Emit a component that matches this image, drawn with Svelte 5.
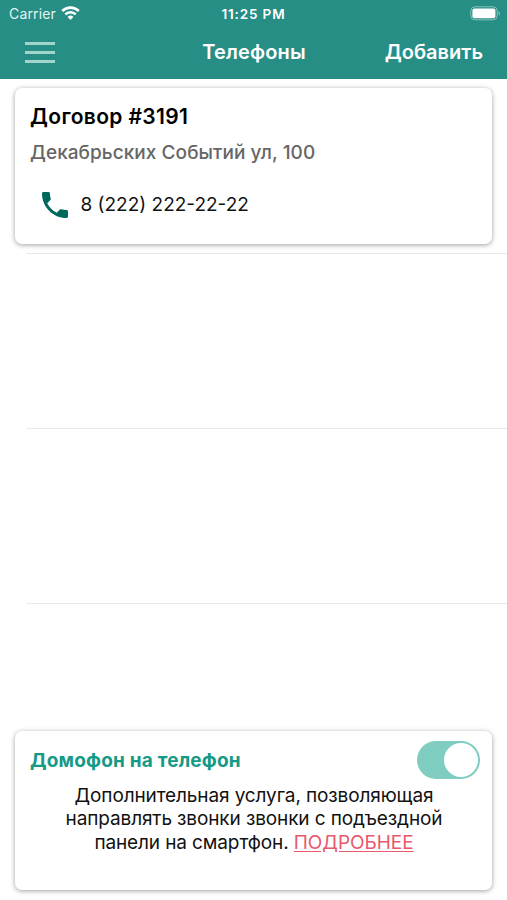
<script>
  const contracts = [
    {
      number: 3191,
      address: 'Декабрьских Событий ул, 100',
      phones: ['8 (222) 222-22-22'],
    },
  ];

  const emptyRows = [1, 2];

  let intercom = $state(true);
</script>

<div class="screen">
  <header>
    <div class="status-bar">
      <div class="carrier">
        <span>Carrier</span>
        <svg width="19" height="14" viewBox="0 0 19 14" fill="none" stroke="#fff" stroke-width="2.7">
          <path d="M1.2 5a11.8 11.8 0 0 1 16.6 0" />
          <path d="M4.3 8.4a7.4 7.4 0 0 1 10.4 0" />
          <path d="M9.5 14 6.6 10.9a4.1 4.1 0 0 1 5.8 0z" fill="#fff" stroke="none" />
        </svg>
      </div>
      <span class="time">11:25 PM</span>
      <svg class="battery" width="31" height="15" viewBox="0 0 31 15">
        <rect x="0.8" y="0.8" width="26.4" height="13" rx="4" fill="none" stroke="#fff" stroke-opacity="0.45" />
        <rect x="2.4" y="2.4" width="23" height="9.8" rx="2" fill="#fff" />
        <path d="M28.6 5.2c1.6.5 1.6 3.7 0 4.2z" fill="#fff" fill-opacity="0.5" />
      </svg>
    </div>
    <nav>
      <button class="menu" aria-label="Меню">
        <span></span>
        <span></span>
        <span></span>
      </button>
      <h1>Телефоны</h1>
      <button class="add">Добавить</button>
    </nav>
  </header>

  <main>
    {#each contracts as contract}
      <div class="row">
        <div class="card">
          <h2>Договор #{contract.number}</h2>
          <p class="address">{contract.address}</p>
          {#each contract.phones as phone}
            <div class="phone">
              <svg width="26" height="26" viewBox="3 3 18 18" fill="#00695c">
                <path d="M6.62 10.79c1.44 2.83 3.76 5.14 6.59 6.59l2.2-2.2c.27-.27.67-.36 1.02-.24 1.12.37 2.33.57 3.57.57.55 0 1 .45 1 1V20c0 .55-.45 1-1 1-9.39 0-17-7.61-17-17 0-.55.45-1 1-1h3.5c.55 0 1 .45 1 1 0 1.25.2 2.45.57 3.57.11.35.03.74-.25 1.02l-2.2 2.2z" />
              </svg>
              <span>{phone}</span>
            </div>
          {/each}
        </div>
      </div>
    {/each}
    {#each emptyRows as row (row)}
      <div class="row"></div>
    {/each}
  </main>

  <section class="card service">
    <div class="service-header">
      <h3>Домофон на телефон</h3>
      <button
        class="toggle"
        class:on={intercom}
        role="switch"
        aria-checked={intercom}
        aria-label="Домофон на телефон"
        onclick={() => (intercom = !intercom)}
      >
        <span class="knob"></span>
      </button>
    </div>
    <p>
      Дополнительная услуга, позволяющая<br />
      направлять звонки звонки с подъездной<br />
      панели на смартфон. <a href="#more">ПОДРОБНЕЕ</a>
    </p>
  </section>
</div>

<style>
  :global(body) {
    background: #fff;
  }

  .screen {
    display: flex;
    flex-direction: column;
    box-sizing: border-box;
    height: 900px;
    padding-bottom: 10px;
    overflow: hidden;
    font-family: Inter, 'Liberation Sans', sans-serif;
    color: #111;
    white-space: nowrap;
  }

  h1,
  h2,
  h3,
  p {
    margin: 0;
  }

  button {
    padding: 0;
    border: 0;
    background: none;
    font: inherit;
    color: inherit;
    cursor: pointer;
  }

  header {
    height: 79px;
    flex: none;
    background: #268e84;
    color: #fff;
  }

  .status-bar,
  nav {
    display: grid;
    grid-template-columns: 1fr auto 1fr;
    align-items: center;
  }

  .status-bar {
    height: 27px;
    padding: 0 6px 0 9px;
    font-size: 14px;
  }

  .carrier {
    display: flex;
    align-items: center;
    gap: 5px;
    color: #e4f4f2;
    letter-spacing: 0.15px;
  }

  .carrier svg {
    margin-top: -1px;
  }

  .time {
    margin-right: 3px;
    font-size: 13.5px;
    font-weight: 600;
    letter-spacing: 0.85px;
  }

  .battery {
    justify-self: end;
    margin-top: -1px;
  }

  nav {
    height: 50px;
    padding: 0 24px 0 25px;
    font-size: 20px;
    font-weight: 600;
    letter-spacing: 0.15px;
  }

  .menu {
    display: flex;
    flex-direction: column;
    gap: 6px;
    width: 30px;
  }

  .menu span {
    height: 3px;
    background: #a3d5cf;
  }

  h1 {
    font-size: inherit;
    font-weight: inherit;
  }

  .add {
    justify-self: end;
    letter-spacing: 0;
  }

  main {
    flex: 1;
  }

  .row {
    position: relative;
    box-sizing: border-box;
    height: 175px;
    padding: 9px 15px 0;
  }

  .row::after {
    content: '';
    position: absolute;
    left: 26px;
    right: 0;
    bottom: 0;
    height: 1px;
    background: #e9e9e9;
  }

  .card {
    box-sizing: border-box;
    height: 156px;
    padding: 16px 15px;
    border-radius: 7px;
    background: #fff;
    box-shadow: 0 1px 5px rgba(0, 0, 0, 0.38);
  }

  h2 {
    font-size: 21px;
    line-height: 26px;
    font-weight: 600;
    letter-spacing: 0.36px;
    color: #000;
  }

  .address {
    margin-top: 11px;
    font-size: 19px;
    line-height: 24px;
    font-weight: 500;
    letter-spacing: 0.06px;
    color: #666;
  }

  .phone {
    display: flex;
    align-items: center;
    gap: 12.5px;
    margin: 26px 0 0 12px;
    font-size: 19px;
    line-height: 26px;
  }

  .phone span {
    padding-top: 1px;
  }

  .service {
    flex: none;
    height: 159px;
    margin: 0 15px;
    padding: 10px 12px 0 15px;
  }

  .service-header {
    display: flex;
    align-items: center;
    justify-content: space-between;
  }

  h3 {
    font-size: 19px;
    font-weight: 700;
    letter-spacing: 0.2px;
    color: #149a85;
  }

  .toggle {
    display: flex;
    align-items: center;
    box-sizing: border-box;
    width: 63px;
    height: 38px;
    padding: 2px;
    border-radius: 19px;
    background: #ccc;
  }

  .toggle.on {
    justify-content: flex-end;
    background: #7fcdc1;
  }

  .knob {
    width: 34px;
    height: 34px;
    border-radius: 50%;
    background: #fff;
  }

  .service p {
    margin: 5px 2px 0 0;
    font-size: 19px;
    line-height: 23.4px;
    letter-spacing: -0.12px;
    text-align: center;
  }

  .service a {
    color: #e8596c;
    letter-spacing: -0.03px;
    text-underline-offset: 2px;
  }
</style>
